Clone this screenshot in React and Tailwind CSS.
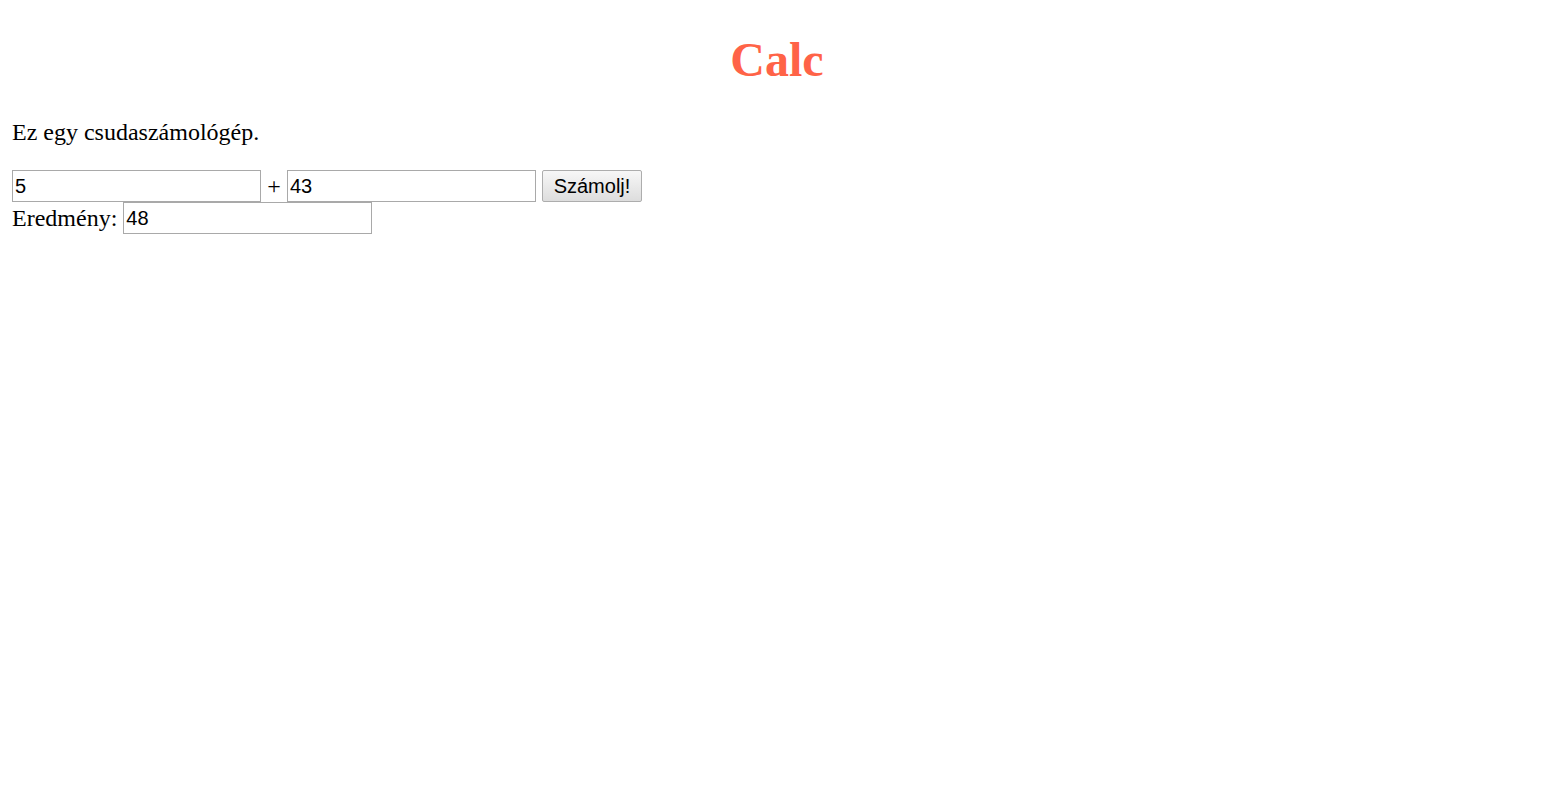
export default function App() {
  return (
    <div className="min-h-screen bg-white px-[12px] pt-[32px] text-black" style={{ fontFamily: '"Liberation Serif", "Times New Roman", serif' }}>
      <h1 className="text-center text-[48px] font-bold leading-[55px] text-[#ff6347]">Calc</h1>
      <p className="mt-[32px] text-[24px] leading-[27px]">Ez egy csudaszámológép.</p>
      <div className="mt-[24px] text-[24px]">
        <div className="flex h-[32px] items-center">
          <input
            defaultValue="5"
            className="h-[32px] w-[249px] border border-[#a9a9a9] px-[2px] text-[20px] text-black outline-none"
            style={{ fontFamily: '"Liberation Sans", Arial, sans-serif' }}
          />
          <span className="w-[26px] text-center leading-[27px]">+</span>
          <input
            defaultValue="43"
            className="h-[32px] w-[249px] border border-[#a9a9a9] px-[2px] text-[20px] text-black outline-none"
            style={{ fontFamily: '"Liberation Sans", Arial, sans-serif' }}
          />
          <button
            className="ml-[6px] h-[32px] w-[100px] rounded-[2px] border border-[#adadad] bg-gradient-to-b from-[#f7f7f7] to-[#dddddd] text-[20px] text-black"
            style={{ fontFamily: '"Liberation Sans", Arial, sans-serif' }}
          >
            Számolj!
          </button>
        </div>
        <div className="flex h-[32px] items-center">
          <span className="leading-[27px]">Eredmény:</span>
          <input
            defaultValue="48"
            className="ml-[6px] h-[32px] w-[249px] border border-[#a9a9a9] px-[2px] text-[20px] text-black outline-none"
            style={{ fontFamily: '"Liberation Sans", Arial, sans-serif' }}
          />
        </div>
      </div>
    </div>
  );
}
